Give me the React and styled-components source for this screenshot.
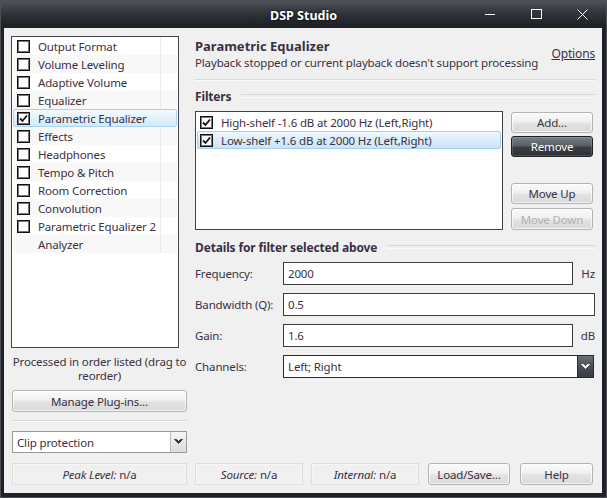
import React from "react";
import styled, { createGlobalStyle, css } from "styled-components";

const Global = createGlobalStyle`
  html, body { margin: 0; padding: 0; background: #1f2227; }
  body { font-family: "Noto Sans", "Open Sans", sans-serif; font-size: 11.5px; letter-spacing: -0.15px; color: #3a3042; }
  * { box-sizing: border-box; }
`;

const Window = styled.div`
  width: 607px;
  height: 498px;
  background: #1e2126;
  border: 1px solid #4c5056;
  display: flex;
  flex-direction: column;
`;

const TitleBar = styled.div`
  height: 27px;
  flex: none;
  position: relative;
  display: flex;
  align-items: center;
  justify-content: center;
  background: linear-gradient(#4f535a 0%, #3a3e44 30%, #25282d 70%, #1d2024 100%);
`;

const Title = styled.div`
  color: #fff;
  font-weight: bold;
  font-size: 12.5px;
  letter-spacing: 0;
  text-shadow: 0 0 3px #000;
  margin-top: 1px;
`;

const Controls = styled.div`
  position: absolute;
  right: 0;
  top: 0;
  height: 27px;
  display: flex;
`;

const Ctl = styled.div`
  width: ${(p) => p.$w}px;
  height: 26px;
  display: flex;
  align-items: center;
  justify-content: center;
`;

const Client = styled.div`
  flex: 1;
  margin: 0 4px 4px 3px;
  background: #f0f0f0;
  padding: 8px 7px 8px 8px;
  display: grid;
  grid-template-columns: 175px minmax(0, 1fr);
  grid-template-rows: 1fr 22px;
  column-gap: 8px;
  row-gap: 9px;
`;

const LeftCol = styled.div`
  display: flex;
  flex-direction: column;
  min-width: 0;
`;

const ListBox = styled.div`
  width: 168px;
  height: 312px;
  margin-left: -1px;
  background: #fff;
  border: 1px solid #45454f;
  padding: 0 1px;
`;

const Row = styled.div`
  height: 18px;
  display: grid;
  grid-template-columns: 148px 1fr;
  background: ${(p) => (p.$alt ? "#f8f8f8" : "#fff")};
  ${(p) =>
    p.$sel &&
    css`
      background: linear-gradient(#f3f9fe, #d3eafa);
      border: 1px solid #a9d4f2;
      border-radius: 2px;
    `}
`;

const RowMain = styled.div`
  display: flex;
  align-items: center;
  padding-left: ${(p) => (p.$sel ? 3 : 4)}px;
  border-right: 1px solid ${(p) => (p.$sel ? "transparent" : "#ececec")};
  white-space: nowrap;
`;

const Box = styled.span`
  width: 13px;
  height: 13px;
  flex: none;
  border: 1px solid #111;
  box-shadow: inset 0 0 0 1px #777;
  background: #fff;
  display: inline-flex;
  align-items: center;
  justify-content: center;
  visibility: ${(p) => (p.$hide ? "hidden" : "visible")};
`;

const Label = styled.span`
  margin-left: 8px;
`;

const Note = styled.div`
  margin-top: 7px;
  text-align: center;
  line-height: 14px;
  white-space: nowrap;
`;

const Button = styled.div`
  height: ${(p) => p.$h || 22}px;
  width: ${(p) => (p.$w ? p.$w + "px" : "auto")};
  margin-top: ${(p) => p.$mt || 0}px;
  margin-left: ${(p) => p.$ml || 0}px;
  display: flex;
  align-items: center;
  justify-content: center;
  border: 1px solid #b4b4b4;
  border-radius: 3px;
  background: linear-gradient(#fbfbfb 0%, #f1f1f1 45%, #e2e2e2 55%, #dadada 100%);
  box-shadow: inset 0 0 0 1px rgba(255, 255, 255, 0.7);
  color: ${(p) => (p.$disabled ? "#b2b2b2" : "#3a3042")};
  white-space: nowrap;
  ${(p) =>
    p.$dark &&
    css`
      border-color: #1f2125;
      background: linear-gradient(#7a7e85 0%, #5a5e65 45%, #3b3e44 55%, #2d3035 100%);
      box-shadow: inset 0 0 0 1px rgba(255, 255, 255, 0.15);
      color: #fff;
    `}
`;

const Sep = styled.div`
  margin-top: ${(p) => p.$mt || 0}px;
  height: 2px;
  border-top: 1px solid #d8d8d8;
  border-bottom: 1px solid #fafafa;
`;

const Combo = styled.div`
  height: ${(p) => p.$h || 22}px;
  margin-top: ${(p) => p.$mt || 0}px;
  display: flex;
  background: #fff;
  border: 1px solid ${(p) => (p.$dark ? "#2a2a2a" : "#9a9a9a")};
`;

const ComboText = styled.div`
  flex: 1;
  display: flex;
  align-items: center;
  padding-left: 4px;
`;

const ComboBtn = styled.div`
  width: 16px;
  display: flex;
  align-items: center;
  justify-content: center;
  border-left: 1px solid ${(p) => (p.$dark ? "#2a2c30" : "#bdbdbd")};
  background: ${(p) =>
    p.$dark
      ? "linear-gradient(#6b6f76, #4b4f56 50%, #393c42)"
      : "linear-gradient(#f7f7f7, #e9e9e9 50%, #dcdcdc)"};
`;

const RightCol = styled.div`
  display: flex;
  flex-direction: column;
  min-width: 0;
`;

const Header = styled.div`
  display: flex;
  justify-content: space-between;
  align-items: flex-start;
  margin-top: 2px;
`;

const H1 = styled.div`
  font-weight: bold;
  font-size: 13px;
  letter-spacing: 0;
  line-height: 16px;
`;

const Sub = styled.div`
  line-height: 17px;
  white-space: nowrap;
`;

const Link = styled.div`
  text-decoration: underline;
  margin-top: 8px;
  line-height: 16px;
  font-size: 12px;
`;

const Group = styled.div`
  margin-top: ${(p) => p.$mt || 0}px;
  display: flex;
  align-items: center;
  gap: 10px;
  font-weight: bold;
  font-size: 12px;
  line-height: 16px;
  &::after {
    content: "";
    flex: 1;
    height: 2px;
    border-top: 1px solid #d8d8d8;
    border-bottom: 1px solid #fafafa;
    margin-top: -2px;
  }
`;

const FilterArea = styled.div`
  margin-top: 6px;
  display: flex;
  gap: 8px;
`;

const FilterList = styled.div`
  width: 308px;
  height: 119px;
  background: #fff;
  border: 1px solid #3f4049;
  padding: 1px 1px;
`;

const FRow = styled.div`
  height: 18px;
  display: flex;
  align-items: center;
  padding-left: 3px;
  white-space: nowrap;
  ${(p) =>
    p.$sel &&
    css`
      background: linear-gradient(#eef7fd, #c9e5f8);
      border: 1px solid #a4d0ef;
      border-radius: 2px;
      padding-left: 2px;
    `}
`;

const BtnCol = styled.div`
  width: 82px;
  display: flex;
  flex-direction: column;
  padding-top: 1px;
`;

const Form = styled.div`
  margin-top: 6px;
  display: grid;
  grid-template-columns: 88px 1fr 22px;
  grid-auto-rows: 23px;
  row-gap: 8px;
`;

const FLabel = styled.div`
  display: flex;
  align-items: center;
  white-space: nowrap;
`;

const Input = styled.div`
  grid-column: ${(p) => (p.$span ? "2 / 4" : "2 / 3")};
  background: #fff;
  border: 1px solid #3d3d3d;
  display: flex;
  align-items: center;
  padding-left: 4px;
`;

const Unit = styled.div`
  display: flex;
  align-items: center;
  justify-content: flex-end;
`;

const ChannelCombo = styled(Combo)`
  grid-column: 2 / 4;
  margin-right: 1px;
`;

const StatusRow = styled.div`
  grid-column: 1 / 3;
  display: flex;
`;

const Status = styled.div`
  width: ${(p) => p.$w}px;
  margin-left: ${(p) => p.$ml || 0}px;
  border: 1px solid #dedede;
  box-shadow: inset 0 0 0 1px #f6f6f6;
  display: flex;
  align-items: center;
  justify-content: center;
  white-space: nowrap;
  i { margin-right: 3px; }
`;

const Check = () => (
  <svg width="9" height="9" viewBox="0 0 9 9">
    <path d="M1 4.5 L3.5 7 L8 1.5" fill="none" stroke="#111" strokeWidth="1.8" />
  </svg>
);

const Chevron = ({ color }) => (
  <svg width="9" height="6" viewBox="0 0 9 6">
    <path d="M0.5 0.5 L4.5 4.5 L8.5 0.5 L6.5 0.5 L4.5 2.5 L2.5 0.5 Z" fill={color} stroke={color} strokeWidth="0.8" strokeLinejoin="round" />
  </svg>
);

const items = [
  ["Output Format", false],
  ["Volume Leveling", false],
  ["Adaptive Volume", false],
  ["Equalizer", false],
  ["Parametric Equalizer", true],
  ["Effects", false],
  ["Headphones", false],
  ["Tempo & Pitch", false],
  ["Room Correction", false],
  ["Convolution", false],
  ["Parametric Equalizer 2", false],
  ["Analyzer", null],
];

export default function App() {
  return (
    <>
      <Global />
      <Window>
        <TitleBar>
          <Title>DSP Studio</Title>
          <Controls>
            <Ctl $w={46}>
              <svg width="10" height="10" viewBox="0 0 10 10">
                <path d="M0 5.5 H10" stroke="#fff" strokeWidth="1" />
              </svg>
            </Ctl>
            <Ctl $w={46}>
              <svg width="11" height="10" viewBox="0 0 11 10">
                <rect x="0.5" y="0.5" width="10" height="9" fill="none" stroke="#fff" strokeWidth="1" />
              </svg>
            </Ctl>
            <Ctl $w={47}>
              <svg width="11" height="11" viewBox="0 0 11 11">
                <path d="M0.5 0.5 L10.5 10.5 M10.5 0.5 L0.5 10.5" stroke="#fff" strokeWidth="1" />
              </svg>
            </Ctl>
          </Controls>
        </TitleBar>
        <Client>
          <LeftCol>
            <ListBox>
              {items.map(([name, checked], i) => {
                const sel = name === "Parametric Equalizer";
                return (
                  <Row key={name} $alt={i % 2 === 1} $sel={sel}>
                    <RowMain $sel={sel}>
                      <Box $hide={checked === null}>{checked && <Check />}</Box>
                      <Label>{name}</Label>
                    </RowMain>
                    <div />
                  </Row>
                );
              })}
            </ListBox>
            <Note>
              Processed in order listed (drag to
              <br />
              reorder)
            </Note>
            <Button $mt={7}>Manage Plug-ins...</Button>
            <Sep $mt={8} />
            <Combo $mt={9}>
              <ComboText>Clip protection</ComboText>
              <ComboBtn>
                <Chevron color="#2a2a2a" />
              </ComboBtn>
            </Combo>
          </LeftCol>
          <RightCol>
            <Header>
              <div>
                <H1>Parametric Equalizer</H1>
                <Sub>Playback stopped or current playback doesn't support processing</Sub>
              </div>
              <Link>Options</Link>
            </Header>
            <Sep $mt={8} />
            <Group $mt={8}>Filters</Group>
            <FilterArea>
              <FilterList>
                <FRow>
                  <Box>
                    <Check />
                  </Box>
                  <Label>High-shelf -1.6 dB at 2000 Hz (Left,Right)</Label>
                </FRow>
                <FRow $sel>
                  <Box>
                    <Check />
                  </Box>
                  <Label>Low-shelf +1.6 dB at 2000 Hz (Left,Right)</Label>
                </FRow>
              </FilterList>
              <BtnCol>
                <Button $h={21}>Add...</Button>
                <Button $h={21} $mt={3} $dark>
                  Remove
                </Button>
                <Button $h={21} $mt={26}>
                  Move Up
                </Button>
                <Button $h={22} $mt={4} $disabled>
                  Move Down
                </Button>
              </BtnCol>
            </FilterArea>
            <Group $mt={10}>Details for filter selected above</Group>
            <Form>
              <FLabel>Frequency:</FLabel>
              <Input>2000</Input>
              <Unit>Hz</Unit>
              <FLabel>Bandwidth (Q):</FLabel>
              <Input $span>0.5</Input>
              <FLabel>Gain:</FLabel>
              <Input>1.6</Input>
              <Unit>dB</Unit>
              <FLabel>Channels:</FLabel>
              <ChannelCombo $dark $h={23}>
                <ComboText>Left; Right</ComboText>
                <ComboBtn $dark>
                  <Chevron color="#fff" />
                </ComboBtn>
              </ChannelCombo>
            </Form>
          </RightCol>
          <StatusRow>
            <Status $w={175}>
              <i>Peak Level:</i>n/a
            </Status>
            <Status $w={108} $ml={8}>
              <i>Source:</i>n/a
            </Status>
            <Status $w={108} $ml={8}>
              <i>Internal:</i>n/a
            </Status>
            <Button $w={82} $h={22} $ml={9}>
              Load/Save...
            </Button>
            <Button $w={73} $h={22} $ml={10}>
              Help
            </Button>
          </StatusRow>
        </Client>
      </Window>
    </>
  );
}
